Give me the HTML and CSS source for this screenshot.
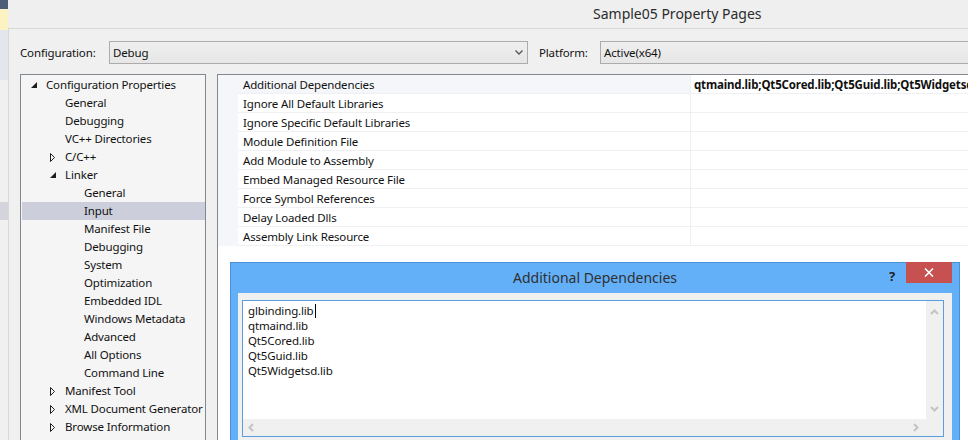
FILE: index.html
```html
<!DOCTYPE html>
<html>
<head>
<meta charset="utf-8">
<link rel="stylesheet" href="styles.css">
</head>
<body>
<div class="screen">
  <div class="behind">
    <div class="bh bh-dark"></div>
    <div class="bh bh-yellow"></div>
    <div class="bh bh-lav"></div>
    <div class="bh bh-light"></div>
    <div class="bh bh-sel"></div>
    <div class="bh bh-rest"></div>
  </div>
  <div class="window">
    <div class="titlebar"><span class="wintitle">Sample05 Property Pages</span></div>
    <div class="winbody">
      <div class="configrow">
        <span class="lbl lbl-config">Configuration:</span>
        <div class="combo combo-config">
          <span class="combo-text">Debug</span>
          <svg class="chev" width="8" height="5" viewBox="0 0 8 5"><polyline points="0.5,0.5 4,4 7.5,0.5" fill="none" stroke="#555" stroke-width="1.3"/></svg>
        </div>
        <span class="lbl lbl-platform">Platform:</span>
        <div class="combo combo-platform"><span class="combo-text">Active(x64)</span></div>
      </div>
      <div class="main">
        <div class="tree">
          <div class="trow lvl0"><span class="tog"><svg width="6" height="6" viewBox="0 0 6 6"><polygon points="6,0 6,6 0,6" fill="#1e1e1e"/></svg></span>Configuration Properties</div>
          <div class="trow lvl1"><span class="tog"></span>General</div>
          <div class="trow lvl1"><span class="tog"></span>Debugging</div>
          <div class="trow lvl1"><span class="tog"></span>VC++ Directories</div>
          <div class="trow lvl1"><span class="tog"><svg width="5" height="9" viewBox="0 0 5 9"><polygon points="0.5,0.5 4.5,4.5 0.5,8.5" fill="none" stroke="#1e1e1e" stroke-width="1"/></svg></span>C/C++</div>
          <div class="trow lvl1"><span class="tog"><svg width="6" height="6" viewBox="0 0 6 6"><polygon points="6,0 6,6 0,6" fill="#1e1e1e"/></svg></span>Linker</div>
          <div class="trow lvl2"><span class="tog"></span>General</div>
          <div class="trow lvl2 selected"><span class="tog"></span>Input</div>
          <div class="trow lvl2"><span class="tog"></span>Manifest File</div>
          <div class="trow lvl2"><span class="tog"></span>Debugging</div>
          <div class="trow lvl2"><span class="tog"></span>System</div>
          <div class="trow lvl2"><span class="tog"></span>Optimization</div>
          <div class="trow lvl2"><span class="tog"></span>Embedded IDL</div>
          <div class="trow lvl2"><span class="tog"></span>Windows Metadata</div>
          <div class="trow lvl2"><span class="tog"></span>Advanced</div>
          <div class="trow lvl2"><span class="tog"></span>All Options</div>
          <div class="trow lvl2"><span class="tog"></span>Command Line</div>
          <div class="trow lvl1"><span class="tog"><svg width="5" height="9" viewBox="0 0 5 9"><polygon points="0.5,0.5 4.5,4.5 0.5,8.5" fill="none" stroke="#1e1e1e" stroke-width="1"/></svg></span>Manifest Tool</div>
          <div class="trow lvl1"><span class="tog"><svg width="5" height="9" viewBox="0 0 5 9"><polygon points="0.5,0.5 4.5,4.5 0.5,8.5" fill="none" stroke="#1e1e1e" stroke-width="1"/></svg></span>XML Document Generator</div>
          <div class="trow lvl1"><span class="tog"><svg width="5" height="9" viewBox="0 0 5 9"><polygon points="0.5,0.5 4.5,4.5 0.5,8.5" fill="none" stroke="#1e1e1e" stroke-width="1"/></svg></span>Browse Information</div>
        </div>
        <div class="grid">
          <div class="grow first"><span class="gmargin"></span><span class="gname">Additional Dependencies</span><span class="gval">qtmaind.lib;Qt5Cored.lib;Qt5Guid.lib;Qt5Widgetsd.lib;%(AdditionalDependencies)</span></div>
          <div class="grow"><span class="gmargin"></span><span class="gname">Ignore All Default Libraries</span><span class="gval"></span></div>
          <div class="grow"><span class="gmargin"></span><span class="gname">Ignore Specific Default Libraries</span><span class="gval"></span></div>
          <div class="grow"><span class="gmargin"></span><span class="gname">Module Definition File</span><span class="gval"></span></div>
          <div class="grow"><span class="gmargin"></span><span class="gname">Add Module to Assembly</span><span class="gval"></span></div>
          <div class="grow"><span class="gmargin"></span><span class="gname">Embed Managed Resource File</span><span class="gval"></span></div>
          <div class="grow"><span class="gmargin"></span><span class="gname">Force Symbol References</span><span class="gval"></span></div>
          <div class="grow"><span class="gmargin"></span><span class="gname">Delay Loaded Dlls</span><span class="gval"></span></div>
          <div class="grow"><span class="gmargin"></span><span class="gname">Assembly Link Resource</span><span class="gval"></span></div>
        </div>
      </div>
    </div>
  </div>

  <div class="dialog">
    <div class="dlg-titlebar">
      <span class="dlg-title">Additional Dependencies</span>
      <span class="dlg-help">?</span>
      <span class="dlg-close"><svg width="10" height="9" viewBox="0 0 10 9"><path d="M1 0.5 L9 8.5 M9 0.5 L1 8.5" stroke="#fff" stroke-width="1.6" fill="none"/></svg></span>
    </div>
    <div class="dlg-client">
      <div class="editbox">
        <div class="edit-content">
          <div class="eline">glbinding.lib<span class="caret"></span></div>
          <div class="eline">qtmaind.lib</div>
          <div class="eline">Qt5Cored.lib</div>
          <div class="eline">Qt5Guid.lib</div>
          <div class="eline">Qt5Widgetsd.lib</div>
        </div>
        <div class="vscroll">
          <svg width="9" height="6" viewBox="0 0 9 6"><polyline points="1,5 4.5,1.5 8,5" fill="none" stroke="#c4c4c4" stroke-width="2"/></svg>
          <svg width="9" height="6" viewBox="0 0 9 6"><polyline points="1,1 4.5,4.5 8,1" fill="none" stroke="#c4c4c4" stroke-width="2"/></svg>
        </div>
        <div class="hscroll">
          <svg width="6" height="9" viewBox="0 0 6 9"><polyline points="5,1 1.5,4.5 5,8" fill="none" stroke="#c4c4c4" stroke-width="2"/></svg>
          <svg width="6" height="9" viewBox="0 0 6 9"><polyline points="1,1 4.5,4.5 1,8" fill="none" stroke="#c4c4c4" stroke-width="2"/></svg>
        </div>
        <div class="corner"></div>
      </div>
    </div>
  </div>
</div>
</body>
</html>
```
FILE: styles.css
```css
* { box-sizing: border-box; }
html, body { margin: 0; padding: 0; }
body {
  width: 968px;
  height: 440px;
  overflow: hidden;
  background: #f0f0f0;
  font-family: "Noto Sans", "Open Sans", sans-serif;
  font-size: 11.5px;
  letter-spacing: -0.15px;
  color: #111;
}
.screen {
  position: relative;
  display: flex;
  width: 968px;
  height: 440px;
  overflow: hidden;
}

/* background window peeking at left */
.behind { width: 8px; flex: none; display: flex; flex-direction: column; }
.bh { flex: none; }
.bh-dark { height: 9px; background: #4d5f78; }
.bh-yellow { height: 21px; background: #fcf3c2; }
.bh-lav { height: 50px; background: #e4e6ed; }
.bh-light { height: 122px; background: #f0f0f0; }
.bh-sel { height: 18px; background: #d3d4dc; }
.bh-rest { flex: 1; background: #f0f0f0; }

.window { flex: 1; display: flex; flex-direction: column; min-width: 0; }
.titlebar {
  height: 29px;
  flex: none;
  background: #efefef;
  border-bottom: 1px solid #d8d8d8;
  padding-left: 585px;
  display: flex;
  align-items: center;
}
.wintitle { font-size: 14px; letter-spacing: 0; color: #2b2b2b; padding-bottom: 2px; white-space: nowrap; }

.winbody {
  flex: 1;
  border-left: 1px solid #d8d8d8;
  background: #f0f0f0;
  padding: 12px 0 0 11px;
  display: flex;
  flex-direction: column;
  min-width: 0;
}
.configrow { display: flex; align-items: center; height: 23px; flex: none; }
.lbl { white-space: nowrap; }
.lbl-config { width: 89px; }
.lbl-platform { width: 61px; margin-left: 11px; }
.combo {
  height: 23px;
  border: 1px solid #acacac;
  background: linear-gradient(#efefef, #e6e6e6);
  display: flex;
  align-items: center;
  padding-left: 3px;
}
.combo-config { width: 419px; justify-content: space-between; padding-right: 4px; }
.combo-platform { flex: 1; margin-right: -20px; }
.combo-text { white-space: nowrap; }
.chev { display: block; }

.main { flex: 1; display: flex; margin-top: 10px; gap: 11px; min-width: 0; }
.tree {
  width: 186px;
  flex: none;
  border: 1px solid #828790;
  border-bottom: none;
  background: #f5f5f5;
  padding: 1px 0 0 1px;
}
.trow {
  height: 18px;
  line-height: 18px;
  display: flex;
  align-items: center;
  white-space: nowrap;
}
.trow.lvl1 { padding-left: 19px; }
.trow.lvl2 { padding-left: 38px; }
.trow.selected { background: #cccedb; }
.tog { width: 24px; flex: none; display: flex; align-items: center; padding-left: 9px; height: 18px; }
.tog svg { display: block; }

.grid {
  flex: 1;
  border: 1px solid #828790;
  border-bottom: none;
  border-right: none;
  background: #fff;
  min-width: 0;
  margin-right: -20px;
}
.grow { display: flex; height: 19px; white-space: nowrap; }
.gmargin { width: 20px; flex: none; background: #f4f6fa; }
.gname {
  width: 453px;
  flex: none;
  padding: 1px 0 0 5px;
  line-height: 17px;
  border-bottom: 1px solid #eef0f4;
  border-right: 1px solid #eef0f4;
}
.gval {
  flex: 1;
  padding: 1px 0 0 3px;
  line-height: 17px;
  border-bottom: 1px solid #eef0f4;
  font-weight: bold;
  overflow: hidden;
}
.grow.first .gname { background: #f4f6fa; }

/* dialog window lying over the page */
.dialog {
  position: absolute;
  left: 230px;
  top: 262px;
  width: 730px;
  height: 200px;
  background: #63b0f9;
  border: 1px solid #4a90d6;
  display: flex;
  flex-direction: column;
  padding: 0 7px;
}
.dlg-titlebar {
  height: 30px;
  flex: none;
  position: relative;
  display: flex;
  align-items: center;
  justify-content: center;
}
.dlg-title { font-size: 14px; letter-spacing: 0; color: #2f2f2f; padding-bottom: 2px; }
.dlg-help {
  position: absolute;
  right: 57px;
  top: 4px;
  font-weight: bold;
  font-size: 13px;
  color: #222;
}
.dlg-close {
  position: absolute;
  right: 0;
  top: -1px;
  width: 46px;
  height: 21px;
  background: #c75050;
  display: flex;
  align-items: center;
  justify-content: center;
}
.dlg-close svg { display: block; }
.dlg-client {
  flex: 1;
  background: #f0f0f0;
  padding: 7px 8px 0 4px;
}
.editbox {
  height: 137px;
  border: 1px solid #5b9ee0;
  background: #fff;
  display: grid;
  grid-template-columns: 1fr 17px;
  grid-template-rows: 1fr 17px;
}
.edit-content { padding: 2px 0 0 5px; }
.eline { height: 15px; line-height: 15px; white-space: nowrap; }
.caret { display: inline-block; width: 1px; height: 14px; background: #000; vertical-align: -3px; margin-left: 1px; }
.vscroll {
  background: #f0f0f0;
  display: flex;
  flex-direction: column;
  justify-content: space-between;
  align-items: center;
  padding: 8px 0 7px;
}
.hscroll {
  background: #f0f0f0;
  display: flex;
  justify-content: space-between;
  align-items: center;
  padding: 0 7px 0 5px;
}
.vscroll svg, .hscroll svg { display: block; }
.corner { background: #f0f0f0; }
```
